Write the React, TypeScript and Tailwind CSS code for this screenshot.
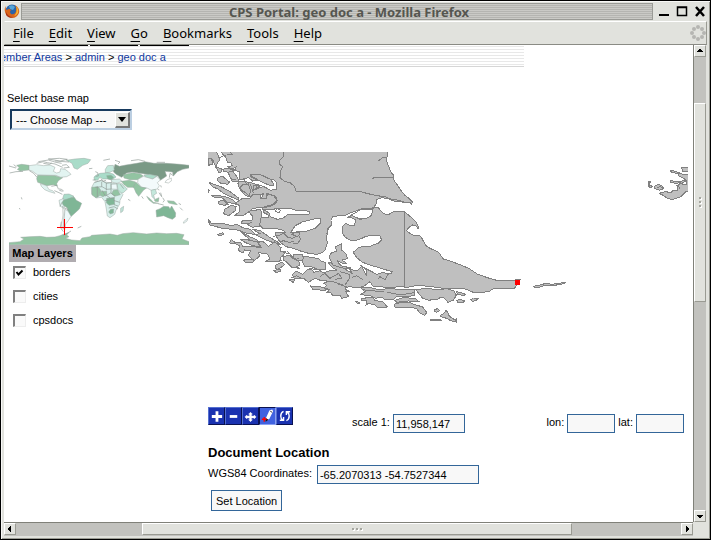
import React from "react";

type Shape = { d: string; fill: string };

/* Overview map: one polygon per country or coast. */
const world: Shape[] = [
  { fill: "#92c4a2", d: "M27,314V308L60,305L72,297L62,292L90,290L120,289L140,292L165,291L180,287L190,283L206,278L200,285L207,290L196,295L215,300L240,302L246,294L270,290L275,286L300,284L330,282L352,286L368,281L400,278L440,282L470,279L500,281L530,280L552,284L546,297L567,305V314Z" },
  { fill: "#92c4a2", d: "M50,76L65,73L87,76V90L78,91L60,93L52,88L58,83Z" },
  { fill: "#e2f4f1", d: "M87,77L110,74L130,77L150,75L165,82L160,94L170,99L180,96L182,86L195,88L205,95L213,103L200,110L182,112L168,106L113,105L98,94L87,90Z" },
  { fill: "#92c4a2", d: "M113,106L165,107L180,112L188,113L175,122L170,131L172,138L160,134L140,137L128,132L113,127L110,116Z" },
  { fill: "#e2f4f1", d: "M121,131L140,137L147,149L158,152L165,160L148,155L134,149L124,139Z" },
  { fill: "#a9dcc9", d: "M199,61L225,57L252,55L272,59L264,70L248,76L232,88L222,84L216,70Z" },
  { fill: "#a9dcc9", d: "M192,163L207,162L222,169L210,176L196,181L188,176Z" },
  { fill: "#e2f4f1", d: "M177,181L190,176L195,188L192,206L180,198Z" },
  { fill: "#7fb696", d: "M190,181L208,175L222,171L229,181L245,190L238,207L225,219L214,229L204,220L202,204L190,196L186,188Z" },
  { fill: "#eef9fa", d: "M195,208L204,213L213,229L205,242L197,252L194,271L189,263L193,230Z" },
  { fill: "#fff", d: "M188,198L193,210L190,250L188,265L184,258L189,225Z" },
  { fill: "#7a9a86", d: "M342,84L345,73L358,79L378,75L410,70L435,65L462,70L500,70L540,73L567,76V84L548,88L532,95L520,108L518,96L495,94L500,108L481,121L474,108L450,104L430,101L397,96L380,99L365,112L348,103L340,95Z" },
  { fill: "#c4e8dc", d: "M316,88L323,77L340,76L343,90L330,97L316,98Z" },
  { fill: "#92c4a2", d: "M370,104L398,98L420,101L430,108L412,119L390,119L372,114Z" },
  { fill: "#aadbc8", d: "M432,105L450,103L471,108L458,117L439,114Z" },
  { fill: "#f3fafb", d: "M414,118L430,109L458,117L471,109L481,120L472,128L478,137L472,147L454,151L443,145L425,142L413,128Z" },
  { fill: "#92c4a2", d: "M397,138L408,127L423,141L439,144L430,151L416,169L408,158L403,146Z" },
  { fill: "#92c4a2", d: "M364,124L388,121L407,126L400,142L383,142L371,133Z" },
  { fill: "#c4e8dc", d: "M348,131L365,131L382,147L370,158L357,162L350,147Z" },
  { fill: "#a9dcc9", d: "M288,106L300,100L324,98L340,102L348,111L335,120L323,117L308,117L300,111L293,121L283,120L282,111Z" },
  { fill: "#7fb696", d: "M320,107L333,106L341,112L335,119L323,116Z" },
  { fill: "#d8efeb", d: "M334,119L358,117L366,124L351,130L335,126Z" },
  { fill: "#d8efeb", d: "M283,127L302,122L315,126L351,132L354,149L369,164L360,181L359,192L348,211L344,223L330,233L322,228L319,207L315,185L305,172L288,174L275,163L274,144Z" },
  { fill: "#92c4a2", d: "M276,142L294,140L302,150L298,168L288,173L276,164Z" },
  { fill: "#7fb696", d: "M320,175L343,173L344,193L327,196L319,188Z" },
  { fill: "#92c4a2", d: "M340,151L353,149L361,164L344,169L335,161Z" },
  { fill: "#7fb696", d: "M332,208L341,207L340,219L331,222L326,216Z" },
  { fill: "#92c4a2", d: "M301,154L320,154L320,164L309,170L300,166Z" },
  { fill: "#eef9fa", d: "M333,133L350,132L352,148L334,147Z" },
  { fill: "#bfe5da", d: "M362,205L371,199L369,213L362,218Z" },
  { fill: "#c4e8dc", d: "M453,151L466,148L470,160L461,165L464,178L456,170Z" },
  { fill: "#fff", d: "M495,127L500,120L514,114L514,123L505,129Z" },
  { fill: "#92c4a2", d: "M440,169L450,176L460,187L475,190L460,190L447,180ZM463,179L477,173L475,185L465,184ZM502,182L522,184L532,194L519,192L506,189Z" },
  { fill: "#7fb696", d: "M468,211L480,206L491,199L506,200L510,206L515,198L527,219L526,231L517,238L504,233L491,227L470,231Z" },
  { fill: "#eef9fa", d: "M550,246L558,239L564,234L561,243L551,250Z" },
];

const worldCoasts =
  "M27,78L48,84M29,99L48,95L69,94M41,74L50,81M88,92L101,100L111,112M110,70L130,65L142,68L165,72L188,82M115,65L145,60L168,67L185,70M145,57L178,55L202,58L180,63ZM165,63L207,66M130,70L148,73L155,69M186,76L199,74L208,82L191,84M154,139L170,136L174,144M163,152L177,158L187,163M173,146L184,148L191,153M178,151L188,154M267,86L277,85M286,95L293,98L295,108L287,109M310,61L330,57M345,61L360,66L354,72M393,62L415,59L435,64M470,67L495,67M278,120L287,120M284,127L304,121L320,130L336,127M302,116L310,123L318,121M286,142L306,140L320,148L333,147M305,126V140M319,129V151M333,130V160M292,141V172M306,151L316,168L332,159L345,168M319,166L332,175L344,173M315,182L328,180M326,204L342,200L354,207M340,181L359,187M342,194L354,198M361,133L371,146M473,148L478,150M482,136L484,142M477,158L485,170L482,158M488,173L493,181L489,187M474,191L491,195M425,169L430,176M520,107L510,100L508,113M525,92L518,100M540,203L548,211M536,190L543,194M384,178L391,182M64,172L66,178M58,204L60,208M233,264L244,259M193,204L204,208L213,220M185,188L180,200M184,245L181,262L190,275M213,273L190,287";

/* Detail map, southern tip of the continent. */
const northLand =
  "M63,18H563L561,36L558,42L565,62L574,84L581,90L580,99L583,108L592,120L602,135L614,150L627,160L638,172L634,177L629,172L605,171L585,169L566,162L546,158L530,164L528,178L520,188L510,192L490,190L470,197L450,204L437,210L410,213L397,216L393,226L394,240L385,250L382,266L378,278L382,292L376,315L366,323L350,328L326,325L298,317L280,310L258,305L240,291L232,279L225,268L228,262L256,263L250,256L220,249L188,250L180,241L178,230L183,218L207,218L205,210L190,202L188,189L214,183L228,174L230,160L222,152L200,145L200,157L194,164L184,162L190,146L174,150L158,148L151,156L136,152L118,130L114,116L120,108L148,112L182,122L160,136L190,124L212,136L230,132L231,113L220,104L194,98L165,87L152,88L150,95L178,107L158,108L145,98L120,105L118,80L104,76L108,66L94,72L84,65L98,62L92,53L82,51L77,36L70,30Z";

const fireLand =
  "M518,191L525,188L535,188L544,200L551,206L565,209L578,201L613,200L625,210L635,218L649,232L654,242L655,252L650,244L638,240L626,248L620,257L630,265L642,271L656,270L664,277L671,290L678,302L692,311L703,316L716,322L730,342L748,347L777,358L806,370L832,387L862,398L890,406L938,406L962,403L952,417L942,432L912,430L880,431L866,440L824,444L806,436L790,430L730,430L686,424L653,421L638,424L620,427L600,423L576,429L553,428L540,423L520,425L510,410L490,425L466,428L449,425L430,430L414,418L390,416L378,407L364,407L345,400L325,412L311,400L288,402L276,390L288,378L308,388L320,375L334,373L342,382L360,377L370,384L386,378L410,375L395,366L384,352L405,357L438,374L460,388L448,373L472,377L485,364L500,393L500,374L486,366L510,377L530,388L545,383L575,386L576,380L540,369L510,360L488,352L470,338L460,322L475,308L492,303L512,303L536,294L545,285L540,273L515,271L497,274L484,281L468,286L450,285L436,277L428,266L429,243L438,235L450,242L464,241L467,225L455,218L440,218L456,212L465,215L478,223L500,220L514,211Z";

const islands = [
  "M22,21L48,18L60,44L52,53L48,68L38,44L24,40Z", "M24,41L35,42L38,58L24,61Z",
  "M49,68L64,70L66,80L57,83Z", "M67,73L85,70L101,75L87,82L72,80Z",
  "M84,82L98,78L109,93L117,109L96,108Z", "M54,98L68,94L88,111L84,118L61,114L52,106Z",
  "M27,112L48,120L67,127L92,141L115,159L115,165L92,155L71,145L52,131L38,126Z",
  "M33,151L52,151L82,157L101,166L110,178L82,171L66,159L46,158Z",
  "M55,170L70,165L84,178L73,181L57,177Z", "M71,206L74,193L94,181L108,185L105,198L86,212Z",
  "M152,88L180,88L213,104L222,120L213,123L186,111L155,94Z",
  "M119,130L128,119L145,117L151,134L149,154L135,142Z", "M160,122L181,123L159,136Z",
  "M108,174L127,160L151,159L160,147L181,148L182,161L198,162L203,147L222,153L231,166L220,178L188,187L157,190L151,199L126,213L105,211L118,200L120,184Z",
  "M145,199L182,193L185,211L181,226L179,243L158,247L143,239L151,234L124,235L127,227L156,225L157,213Z",
  "M24,221L34,235L71,236L93,242L111,238L128,248L151,253L166,269L138,264L117,256L95,253L68,250L29,240Z",
  "M53,268L69,263L70,269L57,273Z", "M24,134L28,137L25,141Z",
  "M156,252L181,257L208,276L231,290L239,298L211,290L187,280L166,269L180,266Z",
  "M120,258L151,276L172,285L186,306L158,302L135,292L119,282L149,284Z",
  "M89,294L94,284L103,291L122,292L128,304L150,305L184,307L170,289L190,290L205,304L224,291L243,308L241,320L257,321L248,333L241,337L244,347L228,350L197,350L210,341L202,327L176,323L179,333L162,348L145,330L152,316L134,315L128,324L114,315L120,304L109,297Z",
  "M131,345L160,344L161,351L136,352Z",
  "M226,361L246,351L254,359L233,374L228,371Z", "M222,376L241,373L242,380L228,382Z",
  "M249,335L267,331L279,340L296,349L300,360L288,366L300,370L275,367L261,352L250,345Z",
  "M279,328L308,329L311,346L295,347L281,338Z",
  "M310,334L336,337L357,342L366,350L378,352L375,375L355,374L337,366L314,364L308,352Z",
  "M388,336L392,325L410,318L406,306L425,296L425,315L437,325L443,341L425,345L442,356L427,354L410,347L423,362L452,369L435,371L398,360Z",
  "M267,405L284,403L280,413L273,408Z", "M277,397L290,392L302,398L287,401Z",
  "M332,423L355,424L380,431L374,437L352,434L338,433Z",
  "M371,414L388,408L406,412L428,420L438,428L437,434L450,440L437,440L446,455L426,460L419,450L398,452L393,444L381,443L388,434L372,428L380,422Z",
  "M482,428L512,428L535,434L566,431L602,433L643,434L645,450L625,455L590,455L578,465L553,464L546,456L527,460L510,452L482,449L495,440Z",
  "M466,468L481,474L474,477ZM485,460L520,457L524,466L550,471L562,486L532,487L523,478L504,476L498,480L500,468L484,465Z",
  "M647,434L679,430L713,434L740,431L762,438L769,450L761,465L744,472L732,459L722,457L711,464L694,462L690,467L667,459L657,446Z",
  "M585,466L610,458L645,460L656,469L625,468L590,472Z",
  "M583,478L602,472L632,474L650,481L667,485L680,502L675,511L660,505L650,491L631,487L586,488Z",
  "M770,440L786,444L796,448L792,453L772,447Z", "M770,466L779,463L794,467L790,472L772,472Z",
  "M812,465L820,459L835,460L828,467L818,469Z",
  "M703,494L713,491L718,497L710,502L704,500Z",
  "M723,510L732,505L738,497L744,503L748,514L757,519L766,526L770,520L769,531L752,527L740,520L722,515Z",
  "M692,523L715,523L725,526L707,527L692,526Z",
  "M1000,424L1018,421L1040,414L1055,418L1070,416L1097,412L1091,416L1059,422L1029,423L1009,429Z",
];

const waters = [
  "M192,194L240,191L275,192L288,196L317,197L328,200L327,207L280,207L262,210L250,219L232,223L211,215L207,204Z",
  "M272,262L286,242L309,230L345,221L363,222L362,233L345,250L321,258L289,261Z",
  "M482,194L516,193L517,203L510,215L500,220L482,222L470,218L453,211Z",
];

const inlets =
  "M535,48L548,38L558,36M515,103L522,98H580M220,274L240,270L250,264L262,276L276,280L290,274L276,268L282,262L300,264L296,272L302,282L294,294L278,295M240,291L250,287L266,292L282,290M226,198L232,190L241,196L236,204L226,198M60,37L78,30M90,18L96,28L80,30M133,103L141,119M92,101L108,104M151,118L160,145M167,120L172,129M480,360L501,373L500,386M486,434L510,437L552,440M535,401L540,395L555,404L562,390L574,384M560,441L600,450L642,443M410,416L440,426M250,323L270,326M328,370L350,374M360,395L374,385L390,400L416,385L425,400L405,403M420,380L448,388L450,398L435,420M455,398L470,392L488,404M262,318L285,345L298,339M144,285L180,292M380,268L384,250";

const eastIslands = [
  "M245,82H270V94H247Z",
  "M234,99L245,102H270V150L256,156L243,170L226,176L214,179L201,174L191,167L178,160L195,155L214,158L218,152L232,151L231,137L240,133L243,125L228,131L218,128L210,127L210,121L219,123L240,124L258,121L254,117L244,111L236,107Z",
  "M210,91L220,92L237,98L228,100L211,95Z",
  "M162,139L169,136L177,133L188,139L190,146L179,151L164,146Z",
  "M145,135L158,139L152,143L145,139Z", "M145,124H152V128H147V132H145Z",
];

function WorldMap() {
  return (
    <svg viewBox="0 0 540 264" className="block w-[180px] h-[88px]" role="img" aria-label="World overview">
      <g transform="translate(-27 -51)" strokeLinejoin="round">
        {world.map((s) => (
          <path key={s.d} d={s.d} fill={s.fill} stroke="#9aa8a2" strokeWidth="1.5" />
        ))}
        <path d={worldCoasts} fill="none" stroke="#8f9a95" strokeWidth="2" />
        <path d="M171,262.500H219M193.500,237V286" stroke="#f00" strokeWidth="3" shapeRendering="crispEdges" />
      </g>
    </svg>
  );
}

function DetailMap() {
  return (
    <svg viewBox="0 0 1440 720" className="block w-[480px] h-[240px]" role="img" aria-label="Base map" shapeRendering="crispEdges">
      <g transform="translate(-24 -21)" fill="#bfbfbf" stroke="#808080" strokeWidth="3">
        <path d={northLand} />
        <path d={fireLand} />
        {waters.map((d) => (
          <path key={d} d={d} fill="#fff" />
        ))}
        {islands.map((d) => (
          <path key={d} d={d} />
        ))}
        <path d={inlets} fill="none" />
        <path
          d="M252,21L249,36L240,45L237,56L248,65L243,75L242,92L239,97L253,109L270,113L283,124L288,138H475L500,145L530,152L555,155L572,162L590,165L620,173M613,200V430"
          fill="none"
        />
        <path d="M945,405H960V419H945Z" fill="#f00" stroke="none" />
      </g>
      <g transform="translate(1176 -36)" fill="#bfbfbf" stroke="#808080" strokeWidth="3">
        {eastIslands.map((d) => (
          <path key={d} d={d} />
        ))}
        <path d="M170,144L180,139L186,143M192,155H204M234,136L240,145M237,129L250,132" fill="none" />
        <path d="M247,127L259,124V132H248Z" fill="#fff" />
      </g>
    </svg>
  );
}

function FirefoxLogo() {
  return (
    <svg viewBox="0 0 16 16" className="w-4 h-4" aria-hidden="true">
      <circle cx="8" cy="8" r="6.500" fill="#2a63a8" />
      <path d="M5 3Q9 1 11 4L9 7L6 6Z" fill="#54a5d8" />
      <path d="M2 3Q1 6 3 7Q5 5 7 7Q5 9 7 11Q11 12 12 8Q13 5 11 2Q16 5 15 10Q13 15 8 15Q2 14 1 9Q0 5 2 3Z" fill="#d9661c" />
      <path d="M12 3Q15 6 14 10Q12 13 10 13Q14 9 12 3Z" fill="#f5b732" />
      <path d="M2 9Q4 14 9 14Q5 16 2 12Z" fill="#a93216" />
    </svg>
  );
}

function Throbber() {
  const dots = [[8, 2], [12, 4], [14, 8], [12, 12], [8, 14], [4, 12], [2, 8], [4, 4]];
  return (
    <svg viewBox="0 0 16 16" className="w-4 h-4" aria-hidden="true">
      {dots.map(([x, y]) => (
        <circle key={`${x}-${y}`} cx={x} cy={y} r="2" fill="#b5b5b2" />
      ))}
    </svg>
  );
}

const raised = "border border-t-white border-l-white border-b-[#9a9b93] border-r-[#9a9b93] bg-[#e1e2dd]";

function ScrollButton({ label, points }: { label: string; points: string }) {
  return (
    <button aria-label={label} className={`${raised} flex w-3 h-3 shrink-0 items-center justify-center`}>
      <svg viewBox="0 0 10 10" className="w-[10px] h-[10px]" shapeRendering="crispEdges" aria-hidden="true">
        <path d={points} fill="#000" />
      </svg>
    </button>
  );
}

function Grip({ vertical = false }: { vertical?: boolean }) {
  return (
    <span className={vertical ? "flex flex-col gap-[2px]" : "flex gap-[2px]"}>
      {[0, 1, 2].map((n) => (
        <span key={n} className="w-[2px] h-[2px] bg-[#a5a69f] shadow-[1px_1px_0_#fff]" />
      ))}
    </span>
  );
}

const tools = [
  { name: "Zoom in", icon: <path d="M7 3h3v4h4v3h-4v4H7v-4H3V7h4z" fill="#fff" /> },
  { name: "Zoom out", icon: <path d="M4 7h8v3H4z" fill="#fff" /> },
  { name: "Pan", icon: <path d="M8 4l2 2H9v2h3V7l2 2-2 2v-1H9v2h1l-2 2-2-2h1v-2H4v1L2 9l2-2v1h3V6H6z" fill="#fff" stroke="#fff" strokeWidth=".5" /> },
  {
    name: "Draw",
    active: true,
    icon: (
      <>
        <path d="M10 2l3-1 1 2-4 8-3 2-1-2z" fill="#fff" />
        <path d="M11 3l2 1" stroke="#223" />
        <path d="M6 10l3 2-3 2z" fill="#111" />
        <path d="M2 11.500h5M4.500 9v5" stroke="#f00" strokeWidth="1.500" />
      </>
    ),
  },
  { name: "Refresh", icon: <path d="M7 3Q4 4 4 8Q4 11 6 12M3 12.500h4V9M10 13Q13 12 13 8Q13 5 11 4M14 3.500h-4V7" fill="none" stroke="#fff" strokeWidth="1.500" /> },
];

const field = "h-[19px] border border-[#336699] bg-[#f8f8f8] px-[2px] text-[11px] leading-4 rounded-none outline-none";
const menus = ["File", "Edit", "View", "Go", "Bookmarks", "Tools", "Help"];
const layers = ["borders", "cities", "cpsdocs"];

export default function App() {
  return (
    <div className="flex min-h-screen flex-col border border-black bg-[#e1e2dd] pr-[3px] pb-[3px] pl-[3px] font-['Liberation_Sans',Arial,sans-serif] text-[11px] leading-4 text-black shadow-[inset_1px_1px_0_#f8f8f6,inset_-1px_-1px_0_#9a9b93]">
      <header className="flex h-5 items-center">
        <FirefoxLogo />
        <h1 className="mr-px ml-px h-[17px] flex-1 border border-[#9a9b96] bg-[repeating-linear-gradient(#cacac6_0_1px,#b5b5b1_1px_2px)] pl-6 text-center font-['Noto_Sans','Open_Sans',sans-serif] text-[13px] leading-[17px] font-bold text-[#555650]">
          CPS Portal: geo doc a - Mozilla Firefox
        </h1>
        <div className="flex gap-px">
          <button aria-label="Minimize" className="flex h-4 w-[17px] justify-end">
            <svg viewBox="0 0 16 16" className="h-4 w-4"><path d="M4 11h10v2H4z" /></svg>
          </button>
          <button aria-label="Maximize" className="flex h-4 w-[17px] justify-end">
            <svg viewBox="0 0 16 16" className="h-4 w-4"><path d="M4.500 4h9v8.500h-9zM4 4.500h10" fill="none" stroke="#000" strokeWidth="1.500" /></svg>
          </button>
          <button aria-label="Close" className="flex h-4 w-[17px] justify-end">
            <svg viewBox="0 0 16 16" className="h-4 w-4"><path d="M5 4l8 9M13 4l-8 9" fill="none" stroke="#000" strokeWidth="2.500" /></svg>
          </button>
        </div>
      </header>

      <nav className="flex h-6 items-center border border-t-white border-r-[#9a9b93] border-b-[#8a8b84] border-l-[#e1e2dd] pl-2 font-['Noto_Sans','Open_Sans',sans-serif] text-[13px]">
        <div className="flex flex-1 gap-[15px]">
          {menus.map((m) => (
            <button key={m} className="leading-5">
              <span className="underline underline-offset-[3px]">{m[0]}</span>
              {m.slice(1)}
            </button>
          ))}
        </div>
        <Throbber />
      </nav>

      <div className="flex flex-1 pr-px">
        <div className="flex min-w-0 flex-1 flex-col">
          <main className="flex-1 bg-white">
            <div className="flex h-px gap-[2px]">
              <span className="w-[84px] bg-black" />
              <span className="w-12 bg-black" />
              <span className="w-[49px] bg-black" />
            </div>
            <div className="h-[21px] w-[520px] overflow-hidden border-b border-[#d6d6d6] bg-[repeating-linear-gradient(#e8e8e8_0_1px,#fff_1px_3px)] leading-[22px] whitespace-nowrap">
              <div className="-ml-1">
                <a href="#areas" className="text-[#1038a0]">ember Areas</a> &gt;{" "}
                <a href="#admin" className="text-[#1038a0]">admin</a> &gt;{" "}
                <a href="#doc" className="text-[#1038a0]">geo doc a</a>
              </div>
            </div>

            <div className="mt-[23px] flex flex-col items-start px-[3px]">
              <label htmlFor="base">Select base map</label>
              <div className="mt-[3px] ml-[3px] grid w-[122px] items-center border-2 border-[#173a5e] border-r-[#bccfe2] border-b-[#bccfe2] bg-[#f8f8f8]">
                <select id="base" className="col-start-1 row-start-1 h-[17px] appearance-none rounded-none bg-transparent pl-1 text-[11px] leading-4 outline-none">
                  <option>--- Choose Map ---</option>
                </select>
                <span className={`${raised} pointer-events-none col-start-1 row-start-1 flex h-4 w-[15px] items-center justify-center justify-self-end border-r-2 border-b-2 border-r-[#777] border-b-[#777]`}>
                  <svg viewBox="0 0 8 5" className="h-[5px] w-2" aria-hidden="true"><path d="M0 0h8L4 5z" /></svg>
                </span>
              </div>
            </div>

            <div className="mt-[22px] flex">
              <aside className="w-[204px] shrink-0 pt-[5px] pl-[5px]">
                <WorldMap />
                <h2 className="w-[67px] bg-[#b0acb0] text-center leading-[17px] font-bold whitespace-nowrap">Map Layers</h2>
                <ul className="mt-[2px] pl-1">
                  {layers.map((name, i) => (
                    <li key={name} className="h-6">
                      <label className="flex h-4 items-center gap-[7px]">
                        <span className="grid h-[13px] w-[13px]">
                          <input
                            type="checkbox"
                            defaultChecked={i === 0}
                            className="peer col-start-1 row-start-1 h-[13px] w-[13px] appearance-none border-t-2 border-r border-b border-l-2 border-t-[#808080] border-r-[#ededed] border-b-[#ededed] border-l-[#808080] bg-[#fafafa]"
                          />
                          <svg viewBox="0 0 13 13" className="pointer-events-none invisible col-start-1 row-start-1 h-[13px] w-[13px] peer-checked:visible" aria-hidden="true">
                            <path d="M3.500 6l2 2.500 4-4" fill="none" stroke="#000" strokeWidth="2" />
                          </svg>
                        </span>
                        {name}
                      </label>
                    </li>
                  ))}
                </ul>
              </aside>

              <section className="min-w-0 flex-1 pb-[11px]">
                <DetailMap />
                <div className="mt-[14px] flex items-start pr-[9px]">
                  <div className="flex pt-px">
                    {tools.map((t) => (
                      <button
                        key={t.name}
                        aria-label={t.name}
                        className={
                          t.active
                            ? "h-[18px] w-[17px] border border-t-[#0a1250] border-r-[#8aa0f0] border-b-[#8aa0f0] border-l-[#0a1250] bg-[#4062e0]"
                            : "h-[18px] w-[17px] border border-t-[#5570d0] border-r-[#0a1250] border-b-[#0a1250] border-l-[#5570d0] bg-[#1a32b0]"
                        }
                      >
                        <svg viewBox="0 0 16 16" className="block h-4 w-[15px]" aria-hidden="true">{t.icon}</svg>
                      </button>
                    ))}
                  </div>
                  <label className="mt-2 ml-[59px] flex gap-[3px] whitespace-nowrap">
                    scale 1:
                    <input className={`${field} w-[72px]`} defaultValue="11,958,147" />
                  </label>
                  <div className="mt-2 ml-auto flex gap-[3px]">
                    <label className="flex gap-[3px]">
                      lon:
                      <input className={`${field} w-12`} />
                    </label>
                    <label className="flex gap-[3px]">
                      lat:
                      <input className={`${field} w-12`} />
                    </label>
                  </div>
                </div>
                <h2 className="mt-3 text-[13px] leading-4 font-bold">Document Location</h2>
                <label className="mt-1 flex gap-[5px]">
                  WGS84 Coordinates:
                  <input className={`${field} w-[162px]`} defaultValue="-65.2070313 -54.7527344" />
                </label>
                <button className="mt-[6px] ml-[3px] block h-[21px] border border-[#336699] bg-[#f8f8f8] px-1">Set Location</button>
              </section>
            </div>
          </main>

          <div className="flex h-[14px] border-t border-t-[#808179] bg-[#c2c2be]">
            <ScrollButton label="Scroll left" points="M6 2v6H5V7H4V6H3V4h1V3h1V2z" />
            <span className="flex-[126]" />
            <span className={`${raised} flex h-3 flex-[427] items-center justify-center`}><Grip /></span>
            <span className="flex-[109]" />
            <ScrollButton label="Scroll right" points="M4 2v6h1V7h1V6h1V4H6V3H5V2z" />
          </div>
        </div>

        <div className="flex w-[13px] flex-col">
          <div className="flex flex-1 flex-col border-l border-l-[#808179] bg-[#c2c2be]">
            <ScrollButton label="Scroll up" points="M2 6h6V5H7V4H6V3H4v1H3v1H2z" />
            <span className="flex-[46]" />
            <span className={`${raised} flex w-3 flex-[196] items-center justify-center`}><Grip vertical /></span>
            <span className="flex-[208]" />
            <ScrollButton label="Scroll down" points="M2 4h6v1H7v1H6v1H4V6H3V5H2z" />
          </div>
          <div className="h-[14px]" />
        </div>
      </div>
    </div>
  );
}
